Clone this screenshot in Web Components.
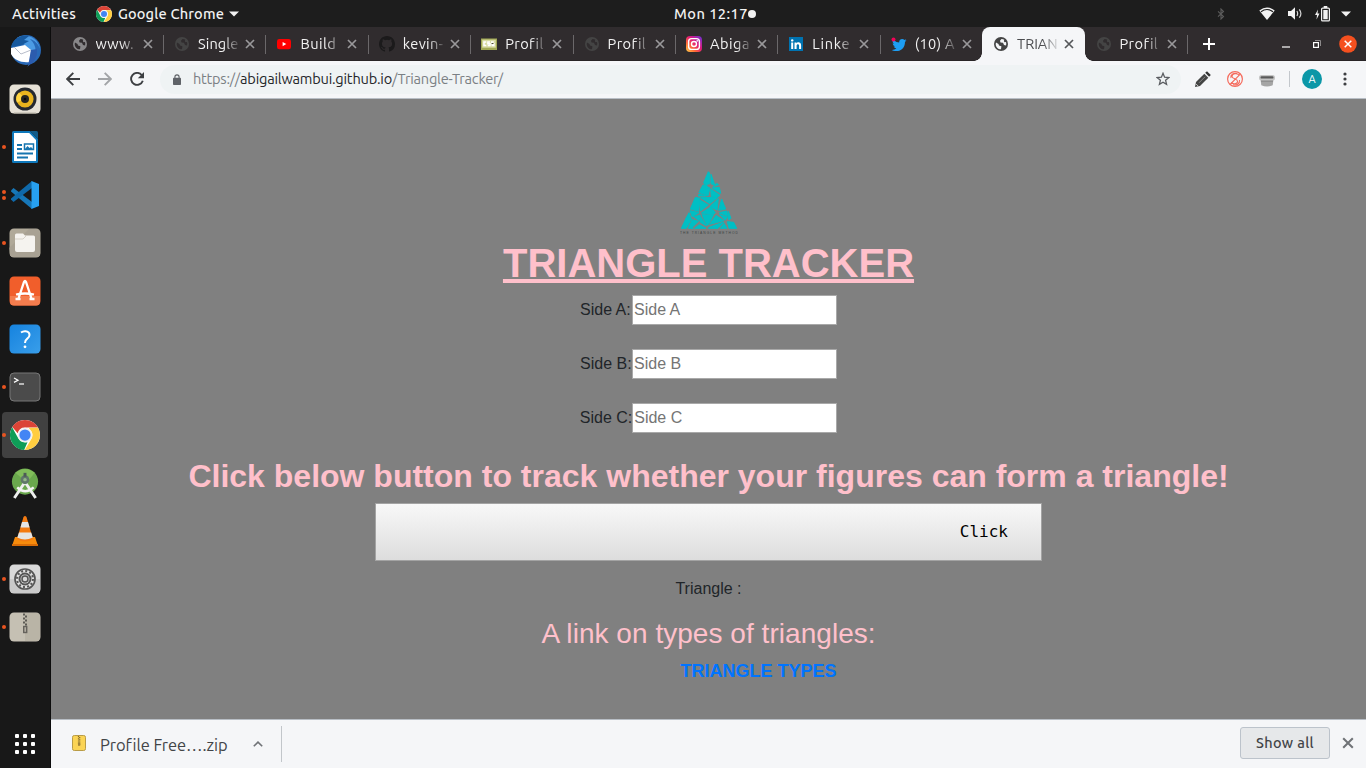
<!DOCTYPE html>
<html lang="en">
<head>
<meta charset="utf-8">
<title>Triangle Tracker</title>
<style>
html,body{margin:0;height:100%;overflow:hidden;background:#181818}
body{font-family:Ubuntu,"Noto Sans","Open Sans",sans-serif}
</style>
</head>
<body>
<desktop-shell></desktop-shell>
<script>
const ICONS = {
chrome:`<svg viewBox="0 0 48 48"><circle cx="24" cy="24" r="24" fill="#fff"/><path d="M24 0a24 24 0 0 1 20.8 12H24a12 12 0 0 0-11.6 9L3.6 11.300A24 24 0 0 1 24 0z" fill="#db4437"/><path d="M45 12.500A24 24 0 0 1 23.600 48L34.400 30A12 12 0 0 0 31.500 14.600L30 12.500z" fill="#ffcd40"/><path d="M3.400 11.600L13.600 30A12 12 0 0 0 28 35.400L22.600 48A24 24 0 0 1 3.400 11.600z" fill="#0f9d58"/><circle cx="24" cy="24" r="11.600" fill="#f1f1f1"/><circle cx="24" cy="24" r="9" fill="#4285f4"/></svg>`,
globe:`<svg viewBox="0 0 14 14"><circle cx="7" cy="7" r="7" fill="currentColor"/><path d="M2 5.400L4.500 7 5 8.600 7.400 9.300 7 12.300C4 12.400 1.700 10 1.700 7zM7.500 2L6 3.800 6.500 5.500 9 5.800 10 8 12 8.400A5.300 5.300 0 0 0 12 5L10.500 5.300 9.800 3.900 10.300 2.700A5.300 5.300 0 0 0 7.500 2z" fill="var(--hole,#302c2e)"/></svg>`,
youtube:`<svg viewBox="0 0 14 14"><rect y="2" width="14" height="10.300" rx="2.400" fill="red"/><path d="M5.600 4.900v4.400L9.300 7.100z" fill="#fff"/></svg>`,
github:`<svg viewBox="0 0 16 16"><path fill="#1b1a1b" d="M8 0C3.580 0 0 3.580 0 8c0 3.540 2.290 6.530 5.470 7.590.4.070.55-.17.55-.38v-1.490c-2.010.37-2.530-.49-2.690-.94-.09-.23-.48-.94-.82-1.130-.28-.15-.68-.52-.01-.53.63-.01 1.080.58 1.230.82.72 1.210 1.870.87 2.330.66.07-.52.28-.87.51-1.070-1.780-.2-3.640-.89-3.640-3.950 0-.87.31-1.590.82-2.150-.08-.2-.36-1.020.08-2.120 0 0 .67-.21 2.200.82a7.600 7.600 0 0 1 4 0c1.530-1.040 2.200-.82 2.200-.82.44 1.100.16 1.920.08 2.120.51.56.82 1.270.82 2.150 0 3.070-1.870 3.750-3.650 3.950.29.25.54.73.54 1.480v2.200c0 .21.15.46.55.38A8 8 0 0 0 16 8c0-4.420-3.580-8-8-8z"/></svg>`,
css:`<svg viewBox="0 0 16 14"><rect y="1.500" width="16" height="11.500" fill="#a2a956"/><rect x="1.200" y="2.700" width="13.600" height="8" fill="#d9dba4"/><path d="M5.300 5H3v3.600h2.300M9 5H6.900v1.700H9v1.900H6.700M12.800 5h-2.100v1.700h2.100v1.900h-2.300" fill="none" stroke="#fff" stroke-width="1.500"/><path d="M10.500 6.500h2" stroke="#4c4c30"/></svg>`,
instagram:`<svg viewBox="0 0 16 16"><defs><linearGradient id="g" x1="0" y1="1" x2="1" y2="0"><stop offset="0" stop-color="#ffd44c"/><stop offset=".3" stop-color="#ff6a35"/><stop offset=".58" stop-color="#df187c"/><stop offset="1" stop-color="#6832dd"/></linearGradient></defs><rect width="16" height="16" rx="4" fill="url(#g)"/><rect x="2.600" y="2.600" width="10.800" height="10.800" rx="3" fill="none" stroke="#fff" stroke-width="1.400"/><circle cx="8" cy="8" r="2.500" fill="none" stroke="#fff" stroke-width="1.400"/><circle cx="11.200" cy="4.900" r=".8" fill="#fff"/></svg>`,
linkedin:`<svg viewBox="0 0 14 14"><rect width="14" height="14" fill="#0073b1"/><circle cx="3.200" cy="3.400" r="1.200" fill="#fff"/><path d="M2.200 5.500h2V12h-2zM5.500 5.500h1.900v.9c1-1.600 4.700-1.600 4.700 1.800V12h-2V8.700c0-2.100-2.500-2-2.500 0V12H5.500z" fill="#fff"/></svg>`,
twitter:`<svg viewBox="0 0 16 14"><path d="M15.500 3.300l-1.600.5q1-.6 1.300-1.500l-1.700.6C11.500.9 7.900 2 8.200 5.400Q4.600 5.200 2 2.500 .8 5 3.100 6.800L1.600 6.500q.2 2.200 2.500 3H2.600q.7 1.600 2.800 2Q3.400 13 .7 12.900c6 3.300 13.300-.2 13.300-8z" fill="#1d9ef4"/><circle cx="2.500" cy="2.500" r="2" fill="#f50057"/></svg>`,
x:`<svg viewBox="0 0 10 10"><path d="M1 1l8 8M9 1L1 9" fill="none" stroke="currentColor" stroke-width="1.700"/></svg>`,
plus:`<svg viewBox="0 0 12 12"><path d="M6 0v12M0 6h12" stroke="#fff" stroke-width="2"/></svg>`,
min:`<svg viewBox="0 0 8 8"><path d="M0 7h8" stroke="#fff" stroke-width="1.200"/></svg>`,
restore:`<svg viewBox="0 0 8 8"><path d="M2 .5h5.500V6" fill="none" stroke="#8d8a8b"/><rect x=".6" y="2.600" width="4.800" height="4.800" fill="none" stroke="#fff" stroke-width="1.200"/></svg>`,
closewin:`<svg viewBox="0 0 18 18"><circle cx="9" cy="9" r="8.800" fill="#f5501f"/><path d="M5.700 5.700l6.600 6.600M12.300 5.700l-6.600 6.600" stroke="#fff" stroke-width="1.500"/></svg>`,
back:`<svg viewBox="0 0 14 14"><path d="M14 7H1.500M7.300.8L1.200 7l6.100 6.200" fill="none" stroke="currentColor" stroke-width="1.900"/></svg>`,
forward:`<svg viewBox="0 0 14 14"><path d="M0 7h12.500M6.700.8L12.800 7l-6.100 6.200" fill="none" stroke="currentColor" stroke-width="1.900"/></svg>`,
reload:`<svg viewBox="0 0 14 14"><path d="M11.700 3A6 6 0 1 0 12.800 8.800" fill="none" stroke="#3d3f42" stroke-width="1.900"/><path d="M14 0v6.200H7.800z" fill="#3d3f42"/></svg>`,
lock:`<svg viewBox="0 0 8 11"><rect y="3.800" width="8" height="7.200" rx=".8" fill="#5f6368"/><path d="M1.900 4.500V3a2.100 2.100 0 0 1 4.200 0v1.500" fill="none" stroke="#5f6368" stroke-width="1.100"/></svg>`,
star:`<svg viewBox="0 0 14 14"><path d="M7 1.300l1.600 3.900 4.200.4-3.200 2.700 1 4.100L7 10.200l-3.600 2.200 1-4.100L1.200 5.600l4.200-.4z" fill="none" stroke="#5a5d61" stroke-width="1.300"/></svg>`,
pencil:`<svg viewBox="0 0 16 16"><path d="M0 16l1-5L9.300 2.700l4 4L5 15z" fill="#444"/><path d="M10.200 1.800L12 .2l3.800 3.700-1.700 1.900z" fill="#333"/><path d="M4 11.800l6-6" stroke="#888"/><path d="M1.300 13.200l1.600 1.600" stroke="#eee"/></svg>`,
swirl:`<svg viewBox="0 0 16 16" fill="none" stroke="#f56b5d"><circle cx="8" cy="8" r="7.400" stroke-width="1.200"/><path d="M12 4.200C10 1.600 5 2.400 5 5.500 5.200 8 10.600 7.600 10.600 10.500 10.500 13 6 13.500 4 11.500M13.300 3.200L3 13.500M10 2.500C6.500 1.500 3 4 4 7M6 13.800c4 1 7-1.600 6.500-4.800" stroke-width="1.100"/></svg>`,
bucket:`<svg viewBox="0 0 16 13"><path d="M1.500 5h13l-.8 6.200Q8 14 2.300 11.200z" fill="#a5a5a5"/><rect y="1" width="16" height="5.600" rx="2.500" fill="#c4c4c4"/><rect x="1.500" y="2.200" width="13" height="2.400" rx="1.200" fill="#5a5a5a"/><path d="M2 7.200h12" stroke="#888"/></svg>`,
dots:`<svg viewBox="0 0 4 14" fill="#3d3f42"><circle cx="2" cy="2" r="1.600"/><circle cx="2" cy="7" r="1.600"/><circle cx="2" cy="12" r="1.600"/></svg>`,
caret:`<svg viewBox="0 0 10 6"><path d="M0 .5h10L5 5.600z" fill="#f2f2f2"/></svg>`,
bluetooth:`<svg viewBox="0 0 8 12"><path d="M1 3.300l5.500 5.200L4 11V1l2.500 2.500L1 8.700" fill="none" stroke="#5c5c5c" stroke-width="1.100"/></svg>`,
wifi:`<svg viewBox="0 0 16 13"><path d="M8 13L.3 3.600Q8-2.700 15.700 3.600z" fill="#f2f2f2"/><path d="M2 4.700Q8 .3 14 4.700" fill="none" stroke="#1d1d1d" stroke-width="1.100"/></svg>`,
volume:`<svg viewBox="0 0 15 13"><path d="M0 4h3l4-3.800v12.600L3 9H0z" fill="#f2f2f2"/><path d="M8.900 4q1.500 2.500 0 5M11.300 2.300q3.200 4.200 0 8.400" fill="none" stroke="#d5d5d5" stroke-width="1.200"/></svg>`,
battery:`<svg viewBox="0 0 15 16"><path d="M3 3.500L0 9h2l-.5 4.500L4.500 7.600H2.500z" fill="#f2f2f2"/><rect x="6.600" y="2.100" width="7.800" height="12.800" rx="1" fill="none" stroke="#f2f2f2" stroke-width="1.200"/><path d="M8.300 4h4.400v9.200H8.300zM8.700 0h3.600v2H8.700z" fill="#f2f2f2"/></svg>`,
chevron:`<svg viewBox="0 0 10 6"><path d="M.8 5.300L5 1.100l4.200 4.200" fill="none" stroke="#707377" stroke-width="1.600"/></svg>`,
zip:`<svg viewBox="0 0 14 16"><rect x=".5" y=".5" width="13" height="15" rx="1.800" fill="#fbd455" stroke="#b99c47"/><path d="M6.500 1v9M7.700 2v8" stroke="#80682b" stroke-width="1.200" stroke-dasharray="1.200 1"/><rect x="6" y="7.600" width="2.200" height="3.200" fill="#a18338"/></svg>`,
thunderbird:`<svg viewBox="0 0 32 32"><circle cx="17" cy="15" r="15" fill="#2869b7"/><path d="M8 3C15-2 29 1 31 14c-2-6-6-9-10-10 6 5 8 14 2 23L18 32c5-5 7-11 4-16z" fill="#4b9be4"/><path d="M2 12C4 4 12-1 20 1l-5 4 5 1-7 4z" fill="#17599e"/><path d="M2 13L16 10l6 5-1 12C12 28 5 25 2 19z" fill="#fff"/><path d="M5 12l7 7 10-4" fill="none" stroke="#b8bdca" stroke-width="1"/><path d="M22 15l-3 16q10-5 9-17z" fill="#2c5cae"/></svg>`,
rhythmbox:`<svg viewBox="0 0 32 30"><rect x=".5" y=".5" width="31" height="29" rx="4.500" fill="#e6e1d6"/><path d="M5 29h22" stroke="#bbb5a8"/><circle cx="16" cy="15" r="11.500" fill="#252930"/><circle cx="16" cy="15" r="8.600" fill="#e9b41e"/><path d="M16 15L10 8.500a8.600 8.600 0 0 0-2 10z" fill="#ffd442"/><circle cx="16" cy="15" r="4" fill="#252521"/><circle cx="16" cy="15" r="1.300" fill="#090909"/></svg>`,
writer:`<svg viewBox="0 0 26 32"><path d="M0 1.500Q0 0 1.500 0H18l8 8v22.500q0 1.500-1.500 1.500h-23Q0 32 0 30.500z" fill="#0e78bb"/><path d="M2 2h15.200L24 9v21H2z" fill="#fff"/><path d="M18 0h6.500Q26 0 26 1.500V8z" fill="#135c89"/><path d="M5 14h5M5 18h5M5 22.500h16M5 26.500h11" stroke="#1574af" stroke-width="2"/><path d="M12.500 13h9v5.500h-9z" fill="#fff" stroke="#1574af" stroke-width="1.500"/><path d="M13 18l2.500-3 2 2 1.500-1 2 2z" fill="#1574af"/></svg>`,
vscode:`<svg viewBox="0 0 28 28"><path d="M0 9.500L2.500 7 21 21v7L0 10.500z" fill="#1777b8"/><path d="M0 18.500L2.500 21 21 7V0L0 17.500z" fill="#0f69aa"/><path d="M20.500 0L28 3v22l-7.500 3z" fill="#27a0f0"/></svg>`,
files:`<svg viewBox="0 0 32 30"><rect x=".5" y=".5" width="31" height="29" rx="4.500" fill="#b0a999"/><path d="M0 20L20 1h7q4 0 4 4v20q0 4-4 4H5q-4 0-4-4z" fill="#a39d8f" opacity=".6"/><path d="M6 7q0-1.500 1.500-1.500H14l2 2h8.500Q26 7.500 26 9v13q0 2-2 2H8q-2 0-2-2z" fill="#f5f3ef"/><path d="M6 11h8l3-3" fill="none" stroke="#d6d1c7"/></svg>`,
software:`<svg viewBox="0 0 32 30"><rect x=".5" y=".5" width="31" height="29" rx="4.500" fill="#f15e2b"/><path d="M1 20h30v6q0 3.500-4 3.500H5Q1 29.500 1 26z" fill="#f47d4e"/><path d="M9 24l6-18q1-2 2 0l6 18M7 18.500q9-2 18 0M6.500 23h5M20.500 23h5" fill="none" stroke="#fff" stroke-width="2.300"/></svg>`,
help:`<svg viewBox="0 0 32 30"><defs><linearGradient id="h" x2="1" y2="1"><stop stop-color="#1683df"/><stop offset="1" stop-color="#399eea"/></linearGradient></defs><rect x=".5" y=".5" width="31" height="29" rx="4.500" fill="url(#h)"/><path d="M12 8.500q2-1.500 4.500-1.300 4 .3 4 3.800 0 2-2.200 3.600Q16 16.300 16 19" fill="none" stroke="#fff" stroke-width="2"/><circle cx="16" cy="22.800" r="1.400" fill="#fff"/></svg>`,
terminal:`<svg viewBox="0 0 32 30"><rect x="1" y="1" width="30" height="28" rx="4" fill="#4b4b4b" stroke="#777"/><path d="M5 6l4 2.200-4 2.200" fill="none" stroke="#fff" stroke-width="1.200"/><path d="M10 12h5" stroke="#fff" stroke-width="1.200"/></svg>`,
studio:`<svg viewBox="0 0 28 32"><circle cx="14" cy="14" r="13.500" fill="#6aa84d"/><path d="M4 5q10-8 20 0l-8 10z" fill="#81bd5a"/><path d="M13 16L3 31M15 16l10 15" stroke="#eee" stroke-width="3"/><path d="M6 20q8 8 17 0" fill="none" stroke="#f4f4f4" stroke-width="2.500"/><circle cx="14" cy="12" r="4.500" fill="#60766a"/><circle cx="14" cy="12" r="1.800" fill="#93b687"/><path d="M12.500 5h3v4h-3z" fill="#4d5b56"/></svg>`,
vlc:`<svg viewBox="0 0 26 30"><path d="M3 21h20l3 9H0z" fill="#f68b0c"/><path d="M0 28h26v2H0z" fill="#d86c07"/><path d="M11.500 1q1.500-1.800 3 0L21 23q-8 5-16 0z" fill="#f37b12"/><path d="M10 6h6l1.600 5.500H8.500zM7 16.500h12.200l1.600 5q-8 4-15.500 0z" fill="#e5e5e5"/></svg>`,
settings:`<svg viewBox="0 0 32 30"><rect x=".5" y=".5" width="31" height="29" rx="4.500" fill="#d9d9d9"/><path d="M1 15h30v10q0 4-4 4H5q-4 0-4-4z" fill="#cacaca"/><circle cx="16" cy="15" r="10" fill="#e1e1e1" stroke="#555" stroke-width="1.700"/><circle cx="16" cy="15" r="8" fill="none" stroke="#555" stroke-width="2" stroke-dasharray="2 2.190"/><circle cx="16" cy="15" r="6.500" fill="#555"/><circle cx="16" cy="15" r="4.500" fill="#d9d9d9"/><circle cx="16" cy="15" r="3" fill="none" stroke="#555" stroke-width="1.500"/></svg>`,
archive:`<svg viewBox="0 0 32 30"><rect x=".5" y=".5" width="31" height="29" rx="4.500" fill="#c5c0b3"/><path d="M16 1h11q4 0 4 4v20q0 4-4 4H16z" fill="#b9b4a6"/><path d="M15 1.500v12" stroke="#5d5b55" stroke-width="2" stroke-dasharray="2 2"/><path d="M17 3.500v10" stroke="#5d5b55" stroke-width="2" stroke-dasharray="2 2"/><rect x="14.700" y="14.500" width="3" height="6" fill="#b2ada1" stroke="#65625c" stroke-width="1.400"/></svg>`,
apps:`<svg viewBox="0 0 20 20" fill="#fff"><rect width="4" height="4" rx="1"/><rect x="8" width="4" height="4" rx="1"/><rect x="16" width="4" height="4" rx="1"/><rect y="8" width="4" height="4" rx="1"/><rect x="8" y="8" width="4" height="4" rx="1"/><rect x="16" y="8" width="4" height="4" rx="1"/><rect y="16" width="4" height="4" rx="1"/><rect x="8" y="16" width="4" height="4" rx="1"/><rect x="16" y="16" width="4" height="4" rx="1"/></svg>`,
logo:`<svg viewBox="60 30 174 198"><g fill="#00bfc4" stroke="#00bfc4" stroke-width="3" stroke-linejoin="round"><path d="M145 35l-14 33 4 7 14-4V39zM153 43v28l12 5zM129 75l-10 18 6 2 22-10-6-8zM159 80l17-6-6-4z"/><path d="M156 84l22-2 4 18zM116 97l34-14-6 24zM117 102l22 6h-24zM152 87l28 19-8 6-18-2z"/><path d="M106 112l-15 35 25 7 4-39zM122 113l52-1-25 19zM118 119l27 16-23 18zM151 138l24-22-4 34-17-8zM185 117l12 30-21 4z"/><path d="M90 152l27 6-20 13zM124 159l28-18 14 17-7 6zM87 158l-9 17 15 0zM178 158l22-5 4 16zM126 164l34 1-15 29-4 2zM168 166l23 16-42 11zM178 163l24 9-7 9zM205 154l8 21-8 4z"/><path d="M80 171l15 5-16 29H64zM97 179l18 5-19 19 4 2H85zM102 171l19-6-3 17zM122 170l17 28-18-11zM104 205l14-11 20 11zM147 202l44-16-17 19h-29zM192 190l9 15h-20zM202 185l19 2 9 18h-23z"/></g><text x="60" y="221" font-family="Liberation Sans" font-size="10" textLength="174" fill="#3f4444">THE TRIANGLE METHOD</text></svg>`
};

class UiElement extends HTMLElement {
  connectedCallback() {
    if (this.shadowRoot) return;
    const t = document.createElement('template');
    t.innerHTML = this.view();
    this.attachShadow({mode:'open'}).append(t.content.cloneNode(true));
    this.ready();
  }
  ready() {}
}
const define = (name, view, ready) => customElements.define(name, class extends UiElement {
  view() { return view(this); }
  ready() { if (ready) ready(this); }
});

/* <ui-icon name w h> */
define('ui-icon', e => `<style>:host{display:block;flex:none;width:${e.getAttribute('w')}px;height:${e.getAttribute('h')||e.getAttribute('w')}px}svg{display:block;width:100%;height:100%}</style>${ICONS[e.getAttribute('name')]}`);

/* Single-line text whose tracking is adjusted so that it spans the width in "w" */
define('fit-text', e => `<style>:host{display:block;flex:none;white-space:pre;width:${e.getAttribute('w')}px}span{display:inline-block}</style><span><slot></slot></span>`, e => {
  const s = e.shadowRoot.querySelector('span');
  const n = e.textContent.length;
  s.style.letterSpacing = ((+e.getAttribute('w') - s.getBoundingClientRect().width) / n).toFixed(3) + 'px';
});

define('top-bar', () => `<style>
:host{display:flex;box-sizing:border-box;height:27px;background:#1d1d1d;color:#f2f2f2;font-size:14.600px;font-weight:500;line-height:27px;align-items:center;padding:0 15px 0 12px}
.app{display:flex;align-items:center;margin-left:20px}.app fit-text{margin:0 5px 0 6px}
.clock{display:flex;align-items:center;gap:2px;margin-left:435px}.dot{width:8px;height:8px;border-radius:50%;background:#f2f2f2;margin-left:-2px}
.tray{display:flex;align-items:center;margin-left:auto}
</style>
<fit-text w="64">Activities</fit-text>
<div class="app"><ui-icon name="chrome" w="16"></ui-icon><fit-text w="106">Google Chrome</fit-text><ui-icon name="caret" w="10" h="6"></ui-icon></div>
<div class="clock"><fit-text w="74">Mon 12:17</fit-text><div class="dot"></div></div>
<div class="tray"><ui-icon name="bluetooth" w="8" h="12" style="margin-right:34px"></ui-icon><ui-icon name="wifi" w="16" h="13" style="margin-right:13px"></ui-icon><ui-icon name="volume" w="15" h="13" style="margin-right:12px"></ui-icon><ui-icon name="battery" w="15" h="16" style="margin-right:11px"></ui-icon><ui-icon name="caret" w="10" h="6"></ui-icon></div>`);

define('dock-item', e => `<style>
:host{display:flex;position:relative;flex:none;height:48px;width:50px;align-items:center;justify-content:center}
.tile{display:flex;width:46px;height:46px;border-radius:4px;align-items:center;justify-content:center;${e.hasAttribute('active')?'background:#414141':''}}
.run{position:absolute;left:2px;top:0;height:48px;display:flex;flex-direction:column;justify-content:center;gap:2px}
.run i{width:4px;height:4px;border-radius:50%;background:#e95420}
</style><div class="tile"><ui-icon name="${e.getAttribute('icon')}" w="${e.getAttribute('w')||32}" h="${e.getAttribute('h')||30}"></ui-icon></div><div class="run">${'<i></i>'.repeat(+e.getAttribute('run')||0)}</div>`);

define('app-dock', () => `<style>:host{display:flex;flex-direction:column;width:50px;background:#181818;border-right:1px solid #0c0c0c}.last{margin-top:auto}</style>
<dock-item icon="thunderbird" w="32" h="32"></dock-item>
<dock-item icon="rhythmbox"></dock-item>
<dock-item icon="writer" run="1" w="26" h="32"></dock-item>
<dock-item icon="vscode" run="2" w="28" h="28"></dock-item>
<dock-item icon="files" run="1"></dock-item>
<dock-item icon="software"></dock-item>
<dock-item icon="help"></dock-item>
<dock-item icon="terminal" run="1"></dock-item>
<dock-item icon="chrome" run="1" active w="30" h="30"></dock-item>
<dock-item icon="studio" w="28" h="31"></dock-item>
<dock-item icon="vlc" w="26" h="30"></dock-item>
<dock-item icon="settings" run="1"></dock-item>
<dock-item icon="archive" run="1"></dock-item>
<dock-item class="last" icon="apps" w="20" h="20"></dock-item>`);

define('browser-tab', e => {
  const a = e.hasAttribute('active');
  return `<style>
:host{display:flex;position:relative;box-sizing:border-box;width:102.4px;height:34px;flex:none;align-items:center;padding-left:11px;font-size:14.600px;line-height:34px;color:${a?'#4b4c4f':'#f3f3f3'};${a?'background:#f5f6f8;border-radius:8px 8px 0 0;--hole:#f5f6f8;':''}}
.fav{width:16px;display:flex;justify-content:center;color:${e.getAttribute('tone')||'#444'}}
.name{width:41px;height:34px;margin-left:8px;overflow:hidden;-webkit-mask-image:linear-gradient(90deg,#000 62%,transparent 106%);mask-image:linear-gradient(90deg,#000 62%,transparent 106%)}
.x{margin-left:6px;color:${a?'#55575a':'#99989a'}}
.line{position:absolute;right:-1px;top:8px;width:1px;height:19px;background:#6b686a}
.foot{position:absolute;bottom:0;width:8px;height:8px}
.l{left:-8px;background:radial-gradient(circle at 0 0,transparent 7.500px,#f5f6f8 8px)}.r{right:-8px;background:radial-gradient(circle at 100% 0,transparent 7.500px,#f5f6f8 8px)}
</style><div class="fav"><ui-icon name="${e.getAttribute('icon')}" w="${e.getAttribute('iw')||14}" h="${e.getAttribute('ih')||14}"></ui-icon></div><div class="name"><fit-text w="${e.getAttribute('w')}">${e.getAttribute('label')}</fit-text></div><div class="x"><ui-icon name="x" w="10"></ui-icon></div>${a?'<div class="foot l"></div><div class="foot r"></div>':e.hasAttribute('noline')?'':'<div class="line"></div>'}`;
});

define('tab-strip', () => `<style>:host{display:flex;box-sizing:border-box;height:34px;background:#302c2e;padding:0 9px 0 9.600px;align-items:center;box-shadow:inset 0 -1px #282426}.add{margin-left:16px}.win{margin-left:auto;display:flex;align-items:center}</style>
<browser-tab icon="globe" tone="#888789" label="www." w="38"></browser-tab>
<browser-tab icon="globe" label="Single" w="40.5"></browser-tab>
<browser-tab icon="youtube" label="Build" w="36"></browser-tab>
<browser-tab icon="github" iw="16" ih="16" label="kevin-" w="40.5"></browser-tab>
<browser-tab icon="css" iw="16" label="Profil" w="38"></browser-tab>
<browser-tab icon="globe" label="Profil" w="38"></browser-tab>
<browser-tab icon="instagram" iw="16" ih="16" label="Abiga" w="40"></browser-tab>
<browser-tab icon="linkedin" label="Linke" w="38"></browser-tab>
<browser-tab icon="twitter" iw="16" label="(10) A" w="40" noline></browser-tab>
<browser-tab active icon="globe" label="TRIAN" w="40.5"></browser-tab>
<browser-tab icon="globe" label="Profil" w="38"></browser-tab>
<ui-icon class="add" name="plus" w="12"></ui-icon>
<div class="win"><ui-icon name="min" w="8" style="margin-right:23px"></ui-icon><ui-icon name="restore" w="8" style="margin-right:18px"></ui-icon><ui-icon name="closewin" w="18"></ui-icon></div>`);

define('tool-bar', () => `<style>
:host{display:flex;box-sizing:border-box;height:38px;background:#f5f6f8;border-bottom:1px solid #b8bec5;align-items:center;padding:0 19px 1px 15px;color:#85888b}
.url{display:flex;box-sizing:border-box;align-items:center;width:1021px;height:29px;border-radius:15px;background:#eff3f4;margin-left:16px;padding:0 11px 0 13px;font-size:14.600px;line-height:28px;color:#7b8084}
.url ui-icon:first-child{margin-right:12px}.url ui-icon:last-child{margin-left:auto}.host{color:#25272a}
.sep{width:1px;height:16px;background:#c3c7cc;margin:0 12px 0 14px}
.me{width:20px;height:20px;border-radius:50%;background:#0b97a7;color:#fff;text-align:center;font-size:11px;line-height:20px;margin-right:21px}
</style>
<ui-icon name="back" w="14" style="color:#3d3f42"></ui-icon><ui-icon name="forward" w="14" style="color:#a3a5a8;margin:0 18px"></ui-icon><ui-icon name="reload" w="14"></ui-icon>
<div class="url"><ui-icon name="lock" w="8" h="11"></ui-icon><fit-text w="47">https://</fit-text><fit-text class="host" w="152">abigailwambui.github.io</fit-text><fit-text w="111">/Triangle-Tracker/</fit-text><ui-icon name="star" w="14"></ui-icon></div>
<ui-icon name="pencil" w="16" style="margin-left:14px"></ui-icon><ui-icon name="swirl" w="16" style="margin-left:16px"></ui-icon><ui-icon name="bucket" w="16" h="13" style="margin-left:16px;margin-top:3px"></ui-icon><div class="sep"></div><div class="me">A</div><ui-icon name="dots" w="4" h="14"></ui-icon>`);

define('side-field', e => `<style>:host{display:flex;height:30px;font-size:16px;line-height:30px;color:#212529}label{min-width:52px}
input{box-sizing:border-box;width:205px;height:30px;margin:0;padding:1px;border:1px solid #a9a9a9;border-radius:0;background:#fff;font:16px "Liberation Sans",Arial,sans-serif}input::placeholder{color:#757575;opacity:1}</style><label>${e.getAttribute('label')}:</label><input placeholder="${e.getAttribute('label')}">`);

define('tracker-page', () => `<style>
:host{display:flex;flex-direction:column;align-items:center;box-sizing:border-box;height:620px;background:gray;padding-top:71px;font-family:"Liberation Sans",Arial,sans-serif;color:#212529}
h1,h2,h3,p{margin:0;font-weight:700;color:pink;white-space:nowrap}
h1{font-size:40px;line-height:48px;margin:3px 0 8px;text-decoration:underline;text-decoration-thickness:4px}
form{display:flex;flex-direction:column;align-items:center;gap:24px;margin:0}
h2{font-size:32px;line-height:38px;margin:24px 0 8px}
button{box-sizing:border-box;width:667px;height:58px;border:1px solid #a3a3a3;border-radius:0;background:linear-gradient(#f8f8f8,#ddd);text-align:right;padding:0 33px 2px;font:16px "DejaVu Sans Mono",monospace;color:#000}
p{font-size:16px;line-height:24px;font-weight:400;color:#212529;margin:16px 0 16px}
h3{font-size:28px;line-height:34px;font-weight:400;margin-bottom:9px;letter-spacing:.04px}
a{font-size:18px;line-height:22px;font-weight:700;color:#0074ff;padding-left:100px}
</style>
<ui-icon name="logo" w="58" h="66"></ui-icon>
<h1>TRIANGLE TRACKER</h1>
<form><side-field label="Side A"></side-field><side-field label="Side B"></side-field><side-field label="Side C"></side-field></form>
<h2>Click below button to track whether your figures can form a triangle!</h2>
<button type="button">Click</button>
<p>Triangle :</p>
<h3>A link on types of triangles:</h3>
<a>TRIANGLE TYPES</a>`);

define('download-shelf', () => `<style>
:host{display:flex;box-sizing:border-box;height:49px;background:#f5f6f8;border-top:1px solid #b8bec5;align-items:center;padding:0 12px 0 21px;color:#424447}
.file{font-size:16.500px;line-height:24px;margin:2px 26px 0 14px}
.sep{width:1px;height:36px;background:#c2c6ca;margin-left:18px}
.all{box-sizing:border-box;width:90px;height:32px;border:1px solid #bcc3cb;border-radius:3px;background:#e6e8ea;margin:-2px 12px 0 auto;display:flex;justify-content:center;font-size:14.500px;font-weight:500;line-height:29px}
</style><ui-icon name="zip" w="14" h="16" style="margin-top:-2px"></ui-icon><fit-text class="file" w="127">Profile Free….zip</fit-text><ui-icon name="chevron" w="10" h="6"></ui-icon><div class="sep"></div><div class="all"><fit-text w="58">Show all</fit-text></div><ui-icon name="x" w="12" style="color:#707377;margin-top:-2px"></ui-icon>`);

define('desktop-shell', () => `<style>:host{display:grid;grid-template:27px 741px/51px 1315px;width:1366px;height:768px}top-bar{grid-column:1/3}main{display:flex;flex-direction:column}</style>
<top-bar></top-bar><app-dock></app-dock><main><tab-strip></tab-strip><tool-bar></tool-bar><tracker-page></tracker-page><download-shelf></download-shelf></main>`);
</script>
</body>
</html>
